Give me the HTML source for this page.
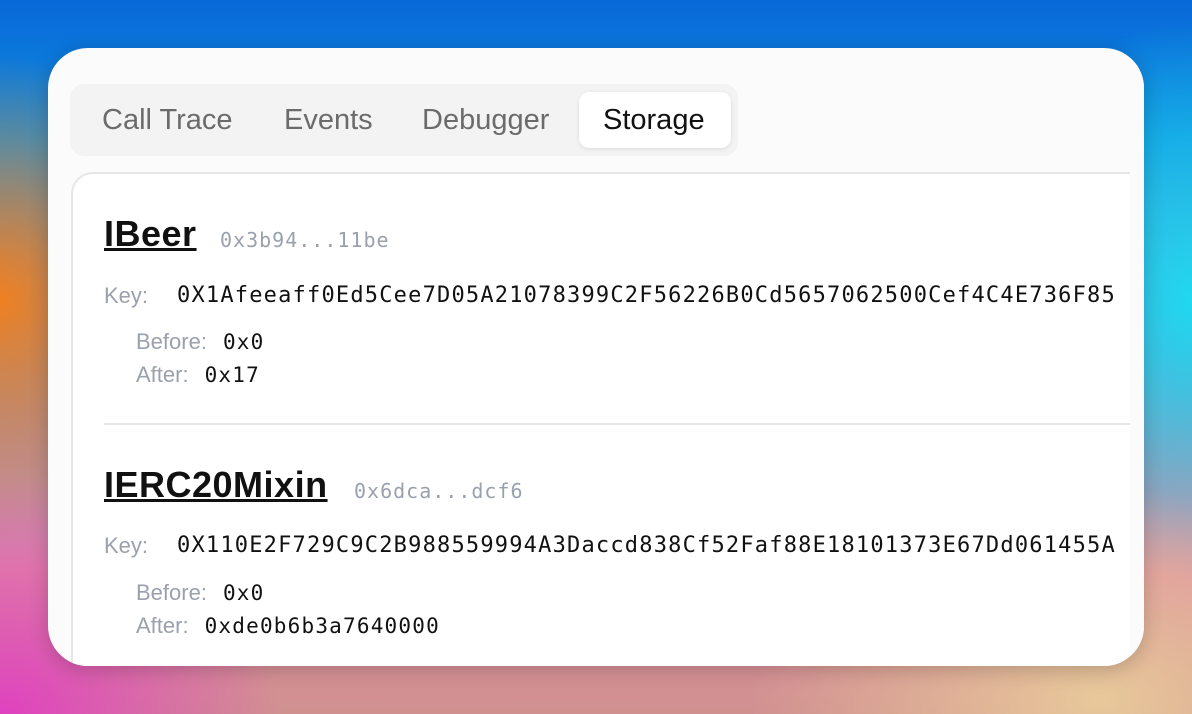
<!DOCTYPE html><html><head><style>
body{margin:0;width:1192px;height:714px;overflow:hidden;font-family:"Liberation Sans",sans-serif;
background:
radial-gradient(ellipse 500px 300px at 1100px 700px,#e8c89a 0%,transparent 70%),
radial-gradient(ellipse 400px 350px at 0px 720px,#e040c0 0%,transparent 70%),
radial-gradient(ellipse 300px 350px at 0px 300px,#f08020 0%,transparent 70%),
radial-gradient(ellipse 300px 400px at 1192px 300px,#20d8f0 0%,transparent 70%),
linear-gradient(180deg,#0868d8 0%,#1090e0 20%,#e090a0 80%,#d09090 100%);}
.card{position:absolute;left:48px;top:48px;width:1096px;height:618px;background:#fbfbfb;border-radius:40px;overflow:hidden;box-shadow:0 4px 20px rgba(0,0,0,.2)}
.tabs{position:absolute;left:22px;top:36px;width:668px;height:72px;background:#f3f3f3;border-radius:14px}
.tab{position:absolute;top:20px;font-size:29px;color:#6b6b6b}
.sel{position:absolute;left:509px;top:8px;width:152px;height:56px;background:#fff;border-radius:10px;box-shadow:0 1px 4px rgba(0,0,0,.1)}
.panel{position:absolute;left:23px;top:124px;width:1100px;height:600px;background:#fff;border:2px solid #e6e6e6;border-radius:22px}
.clip{position:absolute;left:1082px;top:0;width:20px;height:700px;background:#fbfbfb}
.t{position:absolute;left:31px;font-weight:bold;font-size:36px;letter-spacing:0.5px;text-decoration:underline;text-decoration-thickness:3px;color:#111}
.m{font-family:"DejaVu Sans Mono",monospace;font-size:21px;letter-spacing:1.2px;color:#111}
.g{color:#9aa1ad}
.row{position:absolute;font-size:22px;white-space:nowrap}
.v{margin-left:16px}
</style></head><body>
<div class="card">
<div class="tabs">
<div class="sel"></div>
<div class="tab" style="left:32px">Call Trace</div>
<div class="tab" style="left:214px">Events</div>
<div class="tab" style="left:352px">Debugger</div>
<div class="tab" style="left:533px;color:#111">Storage</div>
</div>
<div class="panel">
<div class="t" style="top:39px">IBeer</div>
<div class="row m g" style="left:147px;top:54px;font-size:20px;letter-spacing:1px">0x3b94...11be</div>
<div class="row" style="left:31px;top:109px"><span class="g">Key:</span></div>
<div class="row m" style="left:104px;top:109px">0X1Afeeaff0Ed5Cee7D05A21078399C2F56226B0Cd5657062500Cef4C4E736F85</div>
<div class="row" style="left:63px;top:155px"><span class="g">Before:</span><span class="m v">0x0</span></div>
<div class="row" style="left:63px;top:188px"><span class="g">After:</span><span class="m v">0x17</span></div>
<div style="position:absolute;left:31px;top:249px;width:1060px;height:2px;background:#e6e6e6"></div>
<div class="t" style="top:290px">IERC20Mixin</div>
<div class="row m g" style="left:281px;top:305px;font-size:20px;letter-spacing:1px">0x6dca...dcf6</div>
<div class="row" style="left:31px;top:359px"><span class="g">Key:</span></div>
<div class="row m" style="left:104px;top:359px">0X110E2F729C9C2B988559994A3Daccd838Cf52Faf88E18101373E67Dd061455A</div>
<div class="row" style="left:63px;top:406px"><span class="g">Before:</span><span class="m v">0x0</span></div>
<div class="row" style="left:63px;top:439px"><span class="g">After:</span><span class="m v">0xde0b6b3a7640000</span></div>
</div>
<div class="clip"></div>
</div>
</body></html>
